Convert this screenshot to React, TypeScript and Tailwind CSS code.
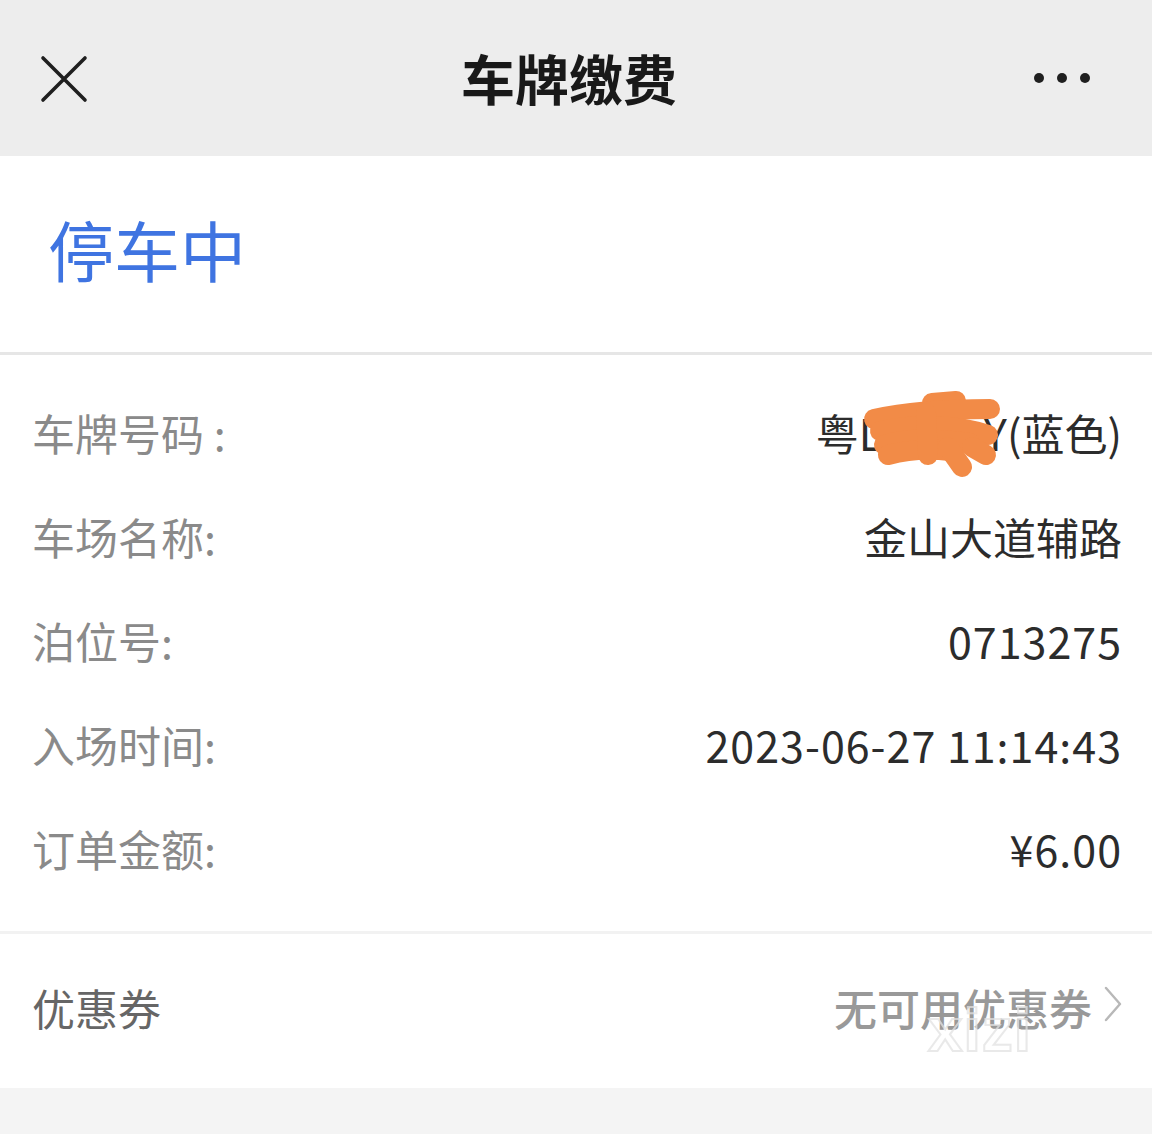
import React from 'react';

const font = { fontFamily: '"Noto Sans CJK SC", "Noto Sans", sans-serif' };

const rows = [
  { label: '车牌号码 :', value: 'plate', digits: false },
  { label: '车场名称:', value: '金山大道辅路', digits: false },
  { label: '泊位号:', value: '0713275', digits: true },
  { label: '入场时间:', value: '2023-06-27 11:14:43', digits: true },
  { label: '订单金额:', value: '¥6.00', digits: true },
];

// redaction scribble over the plate number
function Scribble() {
  return (
    <svg
      className="absolute right-[112px] top-1/2 mt-[-47px] w-[160px] h-[95px] pointer-events-none"
      viewBox="0 0 160 95"
    >
      <g stroke="#f28b47" strokeWidth="20" strokeLinecap="round" strokeLinejoin="round" fill="none">
        <path d="M82 18 L106 16" />
        <path d="M24 34 C60 26 100 24 140 24" />
        <path d="M30 46 C70 38 110 40 138 50" />
        <path d="M34 60 C60 52 90 54 120 58" />
        <path d="M38 70 C60 64 84 64 100 66" />
        <path d="M98 62 L112 82" />
        <path d="M122 62 L136 70" />
        <path d="M76 28 L78 70" />
      </g>
    </svg>
  );
}

export default function App() {
  return (
    <div className="w-[1152px] h-[1134px] bg-[#f4f4f4] flex flex-col" style={font}>
      {/* header */}
      <div className="h-[156px] bg-[#ededed] flex items-center px-[40px]">
        <div className="w-[140px]">
          <svg width="48" height="48" viewBox="0 0 48 48" className="mt-[2px]">
            <path d="M3 3 L45 45 M45 3 L3 45" stroke="#1f1f1f" strokeWidth="3.6" strokeLinecap="round" />
          </svg>
        </div>
        <div className="flex-1 text-center pr-[14px] text-[54px] font-semibold text-[#191919] leading-none">车牌缴费</div>
        <div className="w-[140px] flex justify-end gap-[13px] pr-[22px]">
          <span className="w-[10px] h-[10px] rounded-full bg-[#1f1f1f]" />
          <span className="w-[10px] h-[10px] rounded-full bg-[#1f1f1f]" />
          <span className="w-[10px] h-[10px] rounded-full bg-[#1f1f1f]" />
        </div>
      </div>

      {/* status */}
      <div className="h-[199px] bg-white flex items-center px-[48px] pb-[12px] border-b-[3px] border-[#e6e6e6]">
        <div className="text-[66px] text-[#3f74e1] leading-none">停车中</div>
      </div>

      {/* details */}
      <div className="bg-white pt-[25px] pb-[31px] pl-[32px] pr-[30px] border-b-[3px] border-[#f2f2f2]">
        {rows.map((r) => (
          <div key={r.label} className="h-[104px] flex items-center justify-between">
            <span className="text-[43px] text-[#8a8a8a]">{r.label}</span>
            {r.value === 'plate' ? (
              <span className="relative text-[43px] text-[#2c2c2c] flex items-center">
                粤L<span className="inline-block w-[102px]" />Y(蓝色)
                <Scribble />
              </span>
            ) : (
              <span className={`text-[43px] text-[#2c2c2c] ${r.digits ? 'tracking-[1px]' : ''}`}>{r.value}</span>
            )}
          </div>
        ))}
      </div>

      {/* coupon */}
      <div className="h-[154px] bg-white flex items-center justify-between pl-[32px] pr-[30px] pb-[8px]">
        <span className="text-[43px] text-[#666666]">优惠券</span>
        <div className="relative flex items-center gap-[12px]">
          <span className="text-[43px] font-medium text-[#999999]">无可用优惠券</span>
          <svg width="18" height="36" viewBox="0 0 18 36" className="mb-[6px]">
            <path d="M2 2 L16 18 L2 34" stroke="#b8b8b8" strokeWidth="2.4" fill="none" strokeLinecap="round" strokeLinejoin="round" />
          </svg>
          <span
            className="absolute left-[94px] top-[24px] text-[62px] leading-none font-bold text-transparent tracking-[1px] pointer-events-none"
            style={{ WebkitTextStroke: '2px rgba(225,225,225,0.75)', fontFamily: '"Liberation Sans", sans-serif' }}
          >
            xizi
          </span>
        </div>
      </div>
    </div>
  );
}
